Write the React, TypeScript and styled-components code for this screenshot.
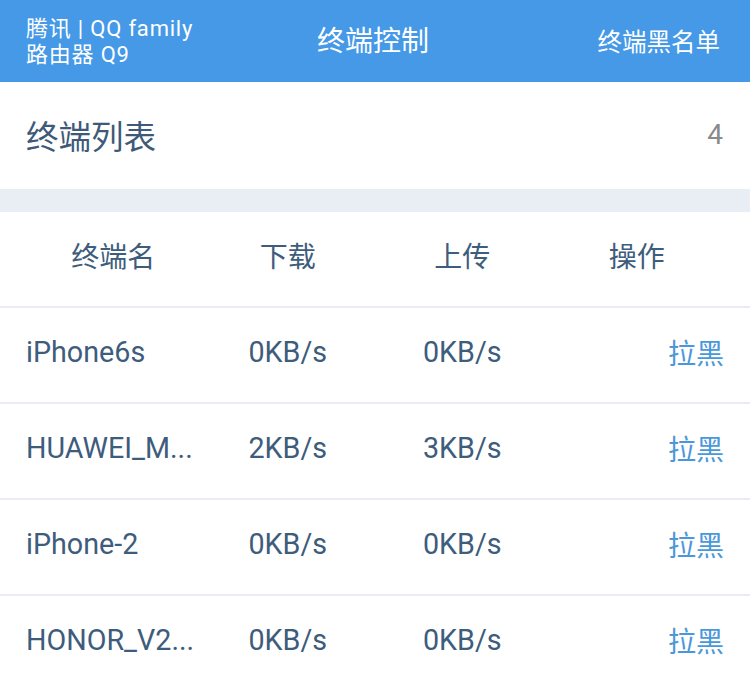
import React from "react";
import styled, { createGlobalStyle } from "styled-components";

const GlobalStyle = createGlobalStyle`
  html, body { margin: 0; padding: 0; background: #ffffff; }
  body { font-family: Roboto, "Noto Sans CJK SC", sans-serif; }
  * { box-sizing: border-box; }
`;

const Page = styled.div`
  width: 750px;
  display: flex;
  flex-direction: column;
  background: #ffffff;
`;

const TopBar = styled.header`
  height: 82px;
  background: #4599e6;
  display: grid;
  grid-template-columns: 1fr auto 1fr;
  align-items: center;
  padding: 0 30px 0 26px;
  color: #ffffff;
`;

const Brand = styled.div`
  font-family: Roboto, "Noto Sans CJK SC", sans-serif;
  font-size: 22px;
  display: flex;
  flex-direction: column;
  padding-top: 2px;
`;

const BrandLine = styled.div`
  height: 26px;
  line-height: 26px;
  white-space: nowrap;
  letter-spacing: 0.8px;
`;

const TopTitle = styled.div`
  font-family: "Noto Sans CJK SC", sans-serif;
  font-size: 28px;
  padding-bottom: 4px;
`;

const TopLink = styled.div`
  font-family: "Noto Sans CJK SC", sans-serif;
  font-size: 24.5px;
  justify-self: end;
  padding-bottom: 2px;
`;

const SectionHead = styled.div`
  height: 107px;
  display: flex;
  align-items: center;
  justify-content: space-between;
  padding: 0 27px 2px 26px;
`;

const SectionTitle = styled.div`
  font-family: "Noto Sans CJK SC", sans-serif;
  font-size: 32.5px;
  color: #3e5a78;
`;

const Count = styled.div`
  font-size: 28px;
  color: #8a8a8a;
`;

const Band = styled.div`
  height: 23px;
  background: #e9eef5;
`;

const Row = styled.div<{ $head?: boolean }>`
  height: ${(p) => (p.$head ? "94px" : "96px")};
  display: grid;
  grid-template-columns: repeat(4, 1fr);
  align-items: center;
  padding: 0 26px ${(p) => (p.$head ? "8px" : "6px")};
  border-top: ${(p) => (p.$head ? "none" : "2px solid #e9edf2")};
`;

const Cell = styled.div<{ $align?: "left" | "center" | "right"; $link?: boolean; $cjk?: boolean }>`
  text-align: ${(p) => p.$align ?? "center"};
  font-family: ${(p) => (p.$cjk ? '"Noto Sans CJK SC", sans-serif' : 'Roboto, "Noto Sans CJK SC", sans-serif')};
  font-size: ${(p) => (p.$cjk ? "28px" : "28.7px")};
  color: ${(p) => (p.$link ? "#4a98da" : "#3e5c7c")};
  white-space: nowrap;
`;

const devices = [
  { name: "iPhone6s", down: "0KB/s", up: "0KB/s" },
  { name: "HUAWEI_M...", down: "2KB/s", up: "3KB/s" },
  { name: "iPhone-2", down: "0KB/s", up: "0KB/s" },
  { name: "HONOR_V2...", down: "0KB/s", up: "0KB/s" },
];

export default function App() {
  return (
    <>
      <GlobalStyle />
      <Page>
        <TopBar>
          <Brand>
            <BrandLine>腾讯 | QQ family</BrandLine>
            <BrandLine>路由器 Q9</BrandLine>
          </Brand>
          <TopTitle>终端控制</TopTitle>
          <TopLink>终端黑名单</TopLink>
        </TopBar>
        <SectionHead>
          <SectionTitle>终端列表</SectionTitle>
          <Count>4</Count>
        </SectionHead>
        <Band />
        <Row $head>
          <Cell $cjk>终端名</Cell>
          <Cell $cjk>下载</Cell>
          <Cell $cjk>上传</Cell>
          <Cell $cjk>操作</Cell>
        </Row>
        {devices.map((d) => (
          <Row key={d.name}>
            <Cell $align="left">{d.name}</Cell>
            <Cell>{d.down}</Cell>
            <Cell>{d.up}</Cell>
            <Cell $align="right" $link $cjk>拉黑</Cell>
          </Row>
        ))}
      </Page>
    </>
  );
}
